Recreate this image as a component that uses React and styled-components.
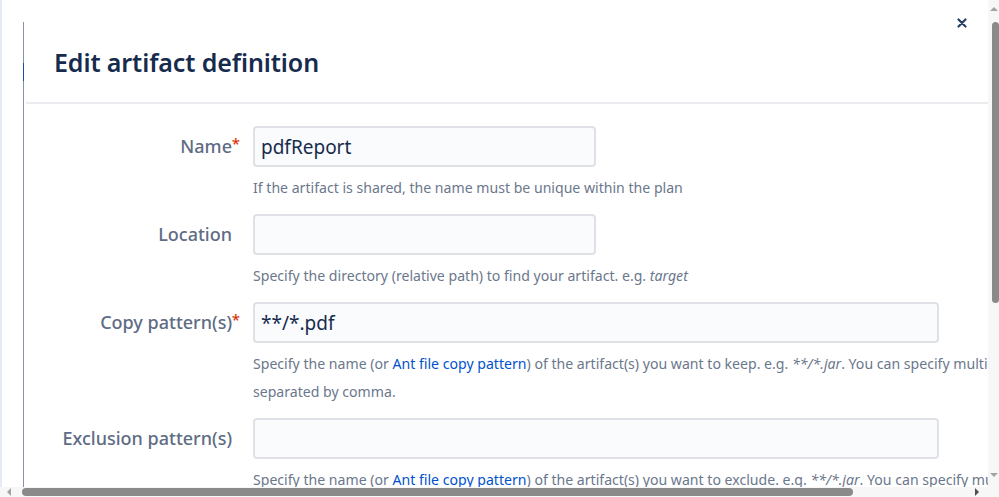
import React from 'react';
import styled, { createGlobalStyle } from 'styled-components';

const GlobalStyle = createGlobalStyle`
  html, body {
    margin: 0;
    padding: 0;
    background: #fff;
    overflow: hidden;
  }
  body {
    font-family: 'Noto Sans', 'Open Sans', sans-serif;
  }
`;

const Frame = styled.div`
  width: 999px;
  height: 497px;
  display: grid;
  grid-template-columns: 988px 11px;
  grid-template-rows: 487px 10px;
  background: #fff;
`;

const Viewport = styled.div`
  position: relative;
  overflow: hidden;
  display: flex;
  align-items: flex-start;
  background: #fff;
`;

const Backdrop = styled.div`
  flex: none;
  width: 21px;
  align-self: stretch;
  border-left: 2px solid #e4ebf5;
`;

const Dialog = styled.div`
  position: relative;
  flex: none;
  width: 1125px;
  margin-top: 22px;
  border-left: 1px solid #8a94a6;
  display: flex;
  flex-direction: column;
  min-height: 470px;

  &::before {
    content: '';
    position: absolute;
    left: -1px;
    top: 41px;
    width: 1px;
    height: 18px;
    background: #1d4aa0;
  }
`;

const Header = styled.div`
  height: 80px;
  display: flex;
  align-items: center;
  padding-left: 28px;
  border-bottom: 2px solid #ebecf0;
  margin-left: 2px;
`;

const Title = styled.h2`
  margin: 0;
  font-size: 25px;
  font-weight: 600;
  color: #172b4d;
  letter-spacing: -0.1px;
`;

const Close = styled.button`
  position: absolute;
  top: 14px;
  left: 953px;
  width: 18px;
  height: 18px;
  padding: 0;
  border: 0;
  background: none;
  display: flex;
  align-items: center;
  justify-content: center;
  color: #2a3f66;
`;

const Form = styled.div`
  display: grid;
  grid-template-columns: 208px 870px;
  column-gap: 21px;
  padding-top: 22px;
  align-items: start;
`;

const Label = styled.label`
  position: relative;
  height: 40px;
  display: flex;
  align-items: center;
  justify-content: flex-end;
  font-size: 18px;
  font-weight: 500;
  color: #5e6c84;
  white-space: nowrap;
`;

const Required = styled.span`
  position: absolute;
  right: -8px;
  top: 7px;
  color: #de350b;
  font-size: 15px;
`;

const Field = styled.div`
  display: flex;
  flex-direction: column;
  margin-bottom: 12px;
`;

const Input = styled.div`
  box-sizing: border-box;
  width: ${(p) => (p.$wide ? '686px' : '343px')};
  height: 41px;
  border: 2px solid #dfe1e6;
  border-radius: 4px;
  background: #fafbfc;
  display: flex;
  align-items: center;
  padding-left: 6px;
  font-size: 19px;
  color: #172b4d;
`;

const Help = styled.div`
  margin-top: 7px;
  font-size: 14.1px;
  line-height: 28px;
  color: #6b778c;

  a {
    color: #0052cc;
    text-decoration: none;
  }
`;

const VBar = styled.div`
  background: #f7f7f7;
  display: flex;
  flex-direction: column;
  align-items: center;
  padding: 7px 0 10px;
`;

const HBar = styled.div`
  background: #f7f7f7;
  display: flex;
  align-items: center;
  padding: 0 9px 0 7px;
`;

const Corner = styled.div`
  background: #f7f7f7;
`;

const Arrow = styled.span`
  flex: none;
  width: 0;
  height: 0;
  border: 4px solid transparent;
  ${(p) => p.$dir === 'up' && 'border-bottom-color: #a3a3a3; border-top-width: 0;'}
  ${(p) => p.$dir === 'down' && 'border-top-color: #a3a3a3; border-bottom-width: 0;'}
  ${(p) => p.$dir === 'left' && 'border-right-color: #a3a3a3; border-left-width: 0;'}
  ${(p) => p.$dir === 'right' && 'border-left-color: #505050; border-right-width: 0;'}
`;

const VThumb = styled.div`
  width: 7px;
  height: 281px;
  margin-top: 11px;
  margin-left: 3px;
  border-radius: 4px;
  background: #8a8a8a;
`;

const VSpacer = styled.div`
  flex: 1;
`;

const HThumb = styled.div`
  width: 831px;
  height: 8px;
  margin-left: 11px;
  border-radius: 4px;
  background: #8a8a8a;
`;

const HSpacer = styled.div`
  flex: 1;
`;

const fields = [
  {
    label: 'Name',
    required: true,
    value: 'pdfReport',
    help: <>If the artifact is shared, the name must be unique within the plan</>,
  },
  {
    label: 'Location',
    value: '',
    help: (
      <>
        Specify the directory (relative path) to find your artifact. e.g. <em>target</em>
      </>
    ),
  },
  {
    label: 'Copy pattern(s)',
    required: true,
    wide: true,
    value: '**/*.pdf',
    help: (
      <>
        Specify the name (or <a href="#">Ant file copy pattern</a>) of the artifact(s) you want
        to keep. e.g. <em>**/*.jar</em>. You can specify multiple patterns separated by comma.
      </>
    ),
  },
  {
    label: 'Exclusion pattern(s)',
    wide: true,
    value: '',
    help: (
      <>
        Specify the name (or <a href="#">Ant file copy pattern</a>) of the artifact(s) you want
        to exclude. e.g. <em>**/*.jar</em>. You can specify multiple patterns separated by comma.
      </>
    ),
  },
];

export default function App() {
  return (
    <>
      <GlobalStyle />
      <Frame>
        <Viewport>
          <Backdrop />
          <Dialog>
            <Header>
              <Title>Edit artifact definition</Title>
            </Header>
            <Form>
              {fields.map((f) => (
                <React.Fragment key={f.label}>
                  <Label>
                    {f.label}
                    {f.required && <Required>*</Required>}
                  </Label>
                  <Field>
                    <Input $wide={f.wide}>{f.value}</Input>
                    <Help>{f.help}</Help>
                  </Field>
                </React.Fragment>
              ))}
            </Form>
          </Dialog>
          <Close aria-label="Close">
            <svg width="10" height="10" viewBox="0 0 10 10">
              <path d="M1.5 1.5 L8.5 8.5 M8.5 1.5 L1.5 8.5" stroke="currentColor" strokeWidth="2.2" strokeLinecap="round" />
            </svg>
          </Close>
        </Viewport>
        <VBar>
          <Arrow $dir="up" />
          <VThumb />
          <VSpacer />
          <Arrow $dir="down" />
        </VBar>
        <HBar>
          <Arrow $dir="left" />
          <HThumb />
          <HSpacer />
          <Arrow $dir="right" />
        </HBar>
        <Corner />
      </Frame>
    </>
  );
}
